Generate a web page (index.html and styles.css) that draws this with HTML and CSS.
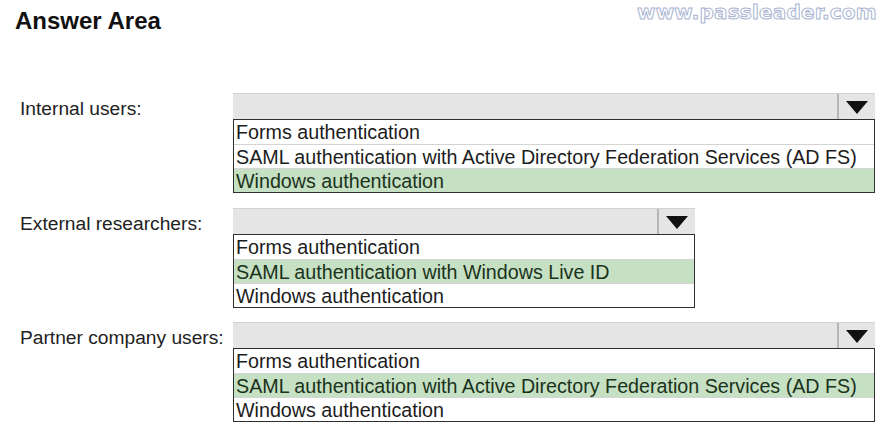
FILE: index.html
```html
<!DOCTYPE html>
<html lang="en">
<head>
    <meta charset="UTF-8">
    <title>Answer Area</title>
    <link rel="stylesheet" href="styles.css">
</head>
<body>
    <div class="page">
        <h2 class="title">Answer Area</h2>
        <div class="watermark">www.passleader.com</div>

        <div class="group first">
            <div class="label">Internal users:</div>
            <div class="select wide">
                <div class="select-head">
                    <span class="head-fill"></span>
                    <span class="arrow"><span class="tri"></span></span>
                </div>
                <ul class="options">
                    <li>Forms authentication</li>
                    <li>SAML authentication with Active Directory Federation Services (AD FS)</li>
                    <li class="chosen">Windows authentication</li>
                </ul>
            </div>
        </div>

        <div class="group second">
            <div class="label">External researchers:</div>
            <div class="select narrow">
                <div class="select-head">
                    <span class="head-fill"></span>
                    <span class="arrow"><span class="tri"></span></span>
                </div>
                <ul class="options">
                    <li>Forms authentication</li>
                    <li class="chosen">SAML authentication with Windows Live ID</li>
                    <li>Windows authentication</li>
                </ul>
            </div>
        </div>

        <div class="group third">
            <div class="label">Partner company users:</div>
            <div class="select wide">
                <div class="select-head">
                    <span class="head-fill"></span>
                    <span class="arrow"><span class="tri"></span></span>
                </div>
                <ul class="options">
                    <li>Forms authentication</li>
                    <li class="chosen">SAML authentication with Active Directory Federation Services (AD FS)</li>
                    <li>Windows authentication</li>
                </ul>
            </div>
        </div>
    </div>
</body>
</html>
```

FILE: styles.css
```css
body {
    margin: 0;
    background-color: #fff;
    font-family: "Liberation Sans", Arial, sans-serif;
    color: #1c1c1c;
}
.page {
    position: relative;
    width: 887px;
    height: 431px;
}
.title {
    margin: 0;
    padding: 7px 0 0 15px;
    height: 31px;
    font-size: 24px;
    font-weight: bold;
    color: #111;
}
.watermark {
    position: absolute;
    top: 0;
    left: 637px;
    font-family: "DejaVu Sans", sans-serif;
    font-weight: bold;
    font-size: 20px;
    letter-spacing: 0.2px;
    color: #fff;
    -webkit-text-stroke: 1px #aab4d2;
}
.group {
    display: flex;
    align-items: flex-start;
}
.first {
    margin-top: 55px;
}
.second {
    margin-top: 15px;
}
.third {
    margin-top: 14px;
}
.label {
    width: 213px;
    padding: 3px 0 0 20px;
    height: 26px;
    line-height: 26px;
    font-size: 19.2px;
    color: #222;
}
.select {
    display: flex;
    flex-direction: column;
}
.wide {
    width: 642px;
}
.narrow {
    width: 462px;
}
.select-head {
    display: flex;
    height: 26px;
    box-sizing: border-box;
    border-top: 1px solid #d2d2d2;
    background-color: #e5e5e5;
}
.head-fill {
    flex: 1;
}
.arrow {
    width: 36px;
    display: flex;
    align-items: center;
    justify-content: center;
    border-left: 2px solid #b5b5b5;
}
.tri {
    width: 0;
    height: 0;
    margin-top: 2px;
    border-left: 11px solid transparent;
    border-right: 11px solid transparent;
    border-top: 13px solid #111;
}
.options {
    list-style: none;
    margin: 0;
    padding: 0;
    border: 1px solid #2e2e2e;
}
.options li {
    height: 24px;
    line-height: 25px;
    padding-left: 2px;
    font-size: 19.7px;
    white-space: nowrap;
    box-sizing: border-box;
}
.options li + li {
    border-top: 1px solid #d4d4d4;
}
.options li.chosen {
    background-color: #c5e0c3;
    color: #1b321b;
}
```
